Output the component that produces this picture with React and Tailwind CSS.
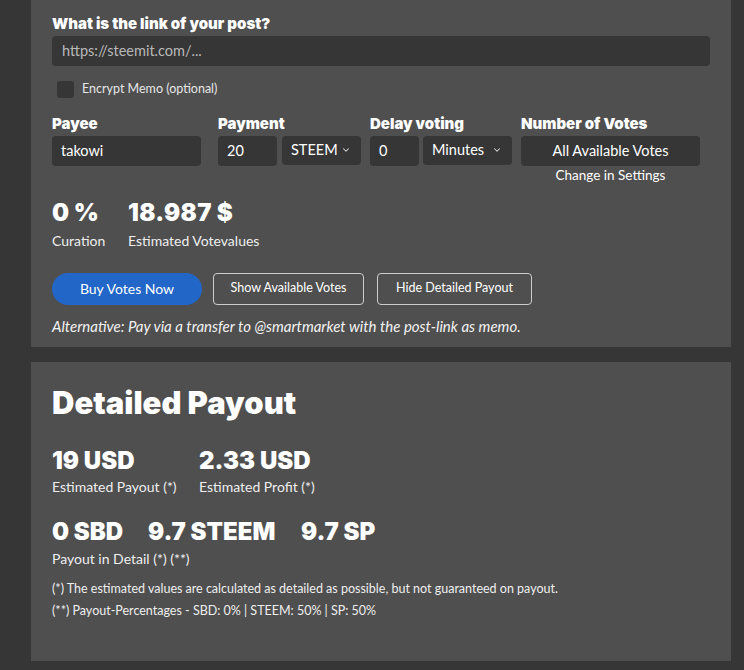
import { ChevronDown } from 'lucide-react';

const body = { fontFamily: 'Lato, "Noto Sans", sans-serif' };
const heavy = 'font-["Inter",sans-serif] font-black';

function Field({ label, className, children }) {
  return (
    <div className={className}>
      <p className={`${heavy} text-[15px] leading-[20px] text-white mb-[2px]`}>{label}</p>
      {children}
    </div>
  );
}

function Select({ value, className }) {
  return (
    <div className={`h-[29px] flex items-center justify-between rounded-[4px] bg-[#363636] pl-[9px] pr-[10px] text-[14.5px] text-white ${className}`}>
      <span>{value}</span>
      <ChevronDown size={10} strokeWidth={2.5} className="text-[#ddd]" />
    </div>
  );
}

function TextBox({ value, className }) {
  return (
    <div className={`h-[30px] flex items-center rounded-[4px] bg-[#363636] px-[9px] text-[14.5px] text-white ${className}`}>
      {value}
    </div>
  );
}

export default function App() {
  return (
    <div className="min-h-screen bg-[#363636] px-[31px] pb-[10px] text-white" style={body}>
      <div className="w-[700px] bg-[#4f4f4f] px-[21px] pt-[14px] pb-[11px]">
        <p className={`${heavy} text-[15px] leading-[20px] mb-[2px]`}>What is the link of your post?</p>
        <div className="h-[30px] w-[658px] flex items-center rounded-[4px] bg-[#363636] px-[10px] text-[14.5px] text-[#b9b9b9]">
          https://steemit.com/...
        </div>

        <div className="mt-[14px] flex items-center gap-[8px] pl-[5px]">
          <span className="h-[17px] w-[17px] rounded-[3px] bg-[#363636]" />
          <span className="text-[12.5px] text-[#e6e6e6]">Encrypt Memo (optional)</span>
        </div>

        <div className="mt-[15px] flex">
          <Field label="Payee" className="w-[149px]">
            <TextBox value="takowi" className="w-[149px]" />
          </Field>
          <Field label="Payment" className="ml-[17px]">
            <div className="flex gap-[5px]">
              <TextBox value="20" className="w-[59px]" />
              <Select value="STEEM" className="w-[79px]" />
            </div>
          </Field>
          <Field label="Delay voting" className="ml-[9px]">
            <div className="flex gap-[4px]">
              <TextBox value="0" className="w-[49px]" />
              <Select value="Minutes" className="w-[89px]" />
            </div>
          </Field>
          <Field label="Number of Votes" className="ml-[9px] w-[179px]">
            <div className="h-[30px] flex items-center justify-center rounded-[4px] bg-[#363636] text-[14.5px]">
              All Available Votes
            </div>
            <p className="text-center text-[13.5px] leading-[18px]">Change in Settings</p>
          </Field>
        </div>

        <div className="mt-[14px] flex">
          <div className="w-[76px]">
            <p className={`${heavy} text-[24px] leading-[30px]`}>0 %</p>
            <p className="mt-[3px] text-[14px] leading-[20px] text-[#eee]">Curation</p>
          </div>
          <div>
            <p className={`${heavy} text-[24px] leading-[30px] tracking-[0.3px]`}>18.987 $</p>
            <p className="mt-[3px] text-[14px] leading-[20px] text-[#eee]">Estimated Votevalues</p>
          </div>
        </div>

        <div className="mt-[22px] flex items-center">
          <button className="h-[32px] w-[150px] rounded-full bg-[#2266c8] text-[14px] text-white">Buy Votes Now</button>
          <button className="ml-[11px] h-[32px] w-[151px] rounded-[4px] border border-[#ccc] text-[12.5px]">Show Available Votes</button>
          <button className="ml-[13px] h-[32px] w-[155px] rounded-[4px] border border-[#ccc] text-[12.5px]">Hide Detailed Payout</button>
        </div>

        <p className="mt-[11px] text-[15px] italic leading-[20px] text-[#f2f2f2]">
          Alternative: Pay via a transfer to @smartmarket with the post-link as memo.
        </p>
      </div>

      <div className="mt-[15px] w-[700px] bg-[#4f4f4f] px-[21px] pt-[21px] pb-[40px]">
        <h1 className={`${heavy} text-[31px] leading-[40px]`}>Detailed Payout</h1>

        <div className="mt-[23px] flex">
          <div className="w-[147px]">
            <p className={`${heavy} text-[24px] leading-[30px]`}>19 USD</p>
            <p className="mt-[1px] text-[14px] leading-[20px] text-[#eee]">Estimated Payout (*)</p>
          </div>
          <div>
            <p className={`${heavy} text-[24px] leading-[30px]`}>2.33 USD</p>
            <p className="mt-[1px] text-[14px] leading-[20px] text-[#eee]">Estimated Profit (*)</p>
          </div>
        </div>

        <div className={`mt-[20px] flex ${heavy} text-[24px] leading-[30px]`}>
          <p className="w-[96px]">0 SBD</p>
          <p className="w-[153px]">9.7 STEEM</p>
          <p>9.7 SP</p>
        </div>
        <p className="mt-[2px] text-[14px] leading-[20px] text-[#eee]">Payout in Detail (*) (**)</p>

        <p className="mt-[10px] text-[12.5px] leading-[20px] text-[#eee]">
          (*) The estimated values are calculated as detailed as possible, but not guaranteed on payout.
        </p>
        <p className="mt-[2px] text-[12.5px] leading-[20px] text-[#eee]">
          (**) Payout-Percentages - SBD: 0% | STEEM: 50% | SP: 50%
        </p>
      </div>
    </div>
  );
}
